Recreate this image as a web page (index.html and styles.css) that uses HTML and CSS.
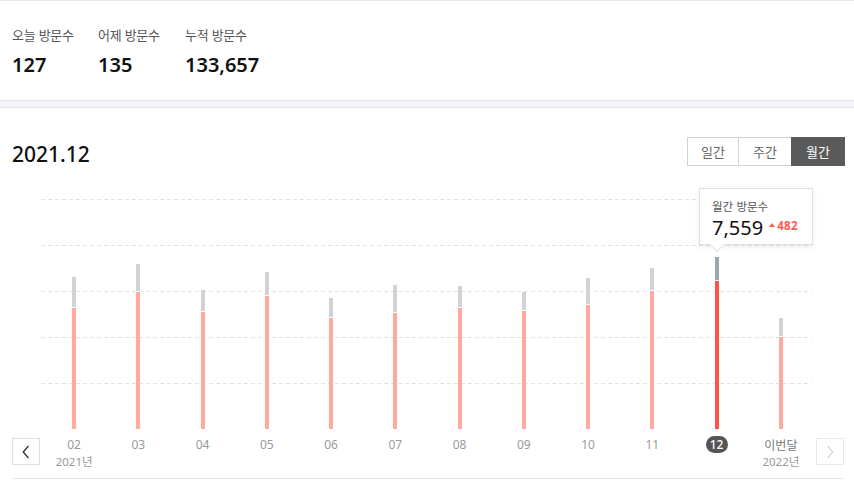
FILE: index.html
```html
<!DOCTYPE html>
<html lang="ko">
<head>
<meta charset="utf-8">
<title>방문 통계</title>
<link rel="stylesheet" href="styles.css">
</head>
<body>
<div class="page">
  <section class="stats">
    <div class="stat"><div class="stat-label">오늘 방문수</div><div class="stat-value">127</div></div>
    <div class="stat"><div class="stat-label">어제 방문수</div><div class="stat-value">135</div></div>
    <div class="stat"><div class="stat-label">누적 방문수</div><div class="stat-value">133,657</div></div>
  </section>
  <div class="band"></div>
  <section class="chart">
    <header class="chart-head">
      <h2 class="period">2021.12</h2>
      <div class="tabs">
        <button class="tab">일간</button>
        <button class="tab">주간</button>
        <button class="tab active">월간</button>
      </div>
    </header>
    <div class="plot">
      <div class="grid-lines">
        <div class="grid-line"></div>
        <div class="grid-line"></div>
        <div class="grid-line"></div>
        <div class="grid-line"></div>
        <div class="grid-line"></div>
      </div>
      <div class="bars">
        <div class="col"><div class="bar"><div class="seg-top" style="height:30px"></div><div class="seg-main" style="height:121px"></div></div></div>
        <div class="col"><div class="bar"><div class="seg-top" style="height:27px"></div><div class="seg-main" style="height:137px"></div></div></div>
        <div class="col"><div class="bar"><div class="seg-top" style="height:21px"></div><div class="seg-main" style="height:117px"></div></div></div>
        <div class="col"><div class="bar"><div class="seg-top" style="height:23px"></div><div class="seg-main" style="height:133px"></div></div></div>
        <div class="col"><div class="bar"><div class="seg-top" style="height:19px"></div><div class="seg-main" style="height:111px"></div></div></div>
        <div class="col"><div class="bar"><div class="seg-top" style="height:27px"></div><div class="seg-main" style="height:116px"></div></div></div>
        <div class="col"><div class="bar"><div class="seg-top" style="height:21px"></div><div class="seg-main" style="height:121px"></div></div></div>
        <div class="col"><div class="bar"><div class="seg-top" style="height:18px"></div><div class="seg-main" style="height:118px"></div></div></div>
        <div class="col"><div class="bar"><div class="seg-top" style="height:26px"></div><div class="seg-main" style="height:124px"></div></div></div>
        <div class="col"><div class="bar"><div class="seg-top" style="height:22px"></div><div class="seg-main" style="height:138px"></div></div></div>
        <div class="col"><div class="bar active"><div class="seg-top" style="height:23px"></div><div class="seg-main" style="height:148px"></div></div></div>
        <div class="col"><div class="bar"><div class="seg-top" style="height:18px"></div><div class="seg-main" style="height:92px"></div></div></div>
      </div>
      <div class="tooltip">
        <div class="tip-label">월간 방문수</div>
        <div class="tip-row"><span class="tip-value">7,559</span><span class="tip-diff"><span class="tri"></span>482</span></div>
      </div>
    </div>
    <div class="axis">
      <button class="nav prev" aria-label="이전">
        <svg width="8" height="14" viewBox="0 0 8 14"><path d="M6.5 1 L1.2 7 L6.5 13" fill="none" stroke="#333" stroke-width="1.3"/></svg>
      </button>
      <div class="labels">
        <div class="lab"><span class="month">02</span><span class="year">2021년</span></div>
        <div class="lab"><span class="month">03</span></div>
        <div class="lab"><span class="month">04</span></div>
        <div class="lab"><span class="month">05</span></div>
        <div class="lab"><span class="month">06</span></div>
        <div class="lab"><span class="month">07</span></div>
        <div class="lab"><span class="month">08</span></div>
        <div class="lab"><span class="month">09</span></div>
        <div class="lab"><span class="month">10</span></div>
        <div class="lab"><span class="month">11</span></div>
        <div class="lab"><span class="month current">12</span></div>
        <div class="lab"><span class="month now">이번달</span><span class="year">2022년</span></div>
      </div>
      <button class="nav next" aria-label="다음">
        <svg width="8" height="14" viewBox="0 0 8 14"><path d="M1.5 1 L6.8 7 L1.5 13" fill="none" stroke="#d4d7dd" stroke-width="1.3"/></svg>
      </button>
    </div>
  </section>
</div>
</body>
</html>
```

FILE: styles.css
```css
* { box-sizing: border-box; }
html, body { margin: 0; padding: 0; background: #fff; }
body {
  font-family: "Noto Sans", "Noto Sans CJK KR", sans-serif;
  color: #111;
}
.page {
  width: 854px;
  border-top: 1px solid #e4e7ed;
}
.stats {
  display: flex;
  padding: 25px 12px 0;
  height: 99px;
}
.stat { white-space: nowrap; }
.stat:nth-child(1) { width: 86px; }
.stat:nth-child(2) { width: 87px; }
.stat-label {
  font-family: "Noto Sans CJK KR", sans-serif;
  font-size: 13px;
  line-height: 17px;
  color: #555;
  letter-spacing: -0.3px;
}
.stat-value {
  margin-top: 9px;
  font-size: 20px;
  line-height: 26px;
  font-weight: 600;
  color: #111;
}

.band {
  height: 8px;
  background: #f4f5f8;
  border-top: 1px solid #e2e5eb;
  border-bottom: 1px solid #e2e5eb;
}

.chart {
  padding: 0 10px 0 12px;
}
.chart-head {
  display: flex;
  justify-content: space-between;
  align-items: flex-start;
  height: 58px;
  padding-top: 29px;
  margin-right: -1px;
}
.period {
  margin: 3px 0 0;
  font-size: 21px;
  line-height: 29px;
  font-weight: 500;
  color: #111;
}
.tabs { display: flex; }
.tab {
  width: 54px;
  height: 29px;
  margin: 0 0 0 -1px;
  padding: 0;
  border: 1px solid #cfd4dc;
  background: #fff;
  color: #666;
  font-family: "Noto Sans CJK KR", sans-serif;
  font-size: 13px;
  line-height: 27px;
}
.tab:first-child { margin-left: 0; width: 52px; }
.tab.active {
  background: #5a5a5a;
  border-color: #5a5a5a;
  color: #fff;
}

.plot {
  position: relative;
  margin: 33px 0 0 30px;
  width: 771px;
  height: 230px;
}
.grid-lines {
  position: absolute;
  left: -1px;
  right: 1px;
  top: 0;
  display: flex;
  flex-direction: column;
  gap: 45px;
}
.grid-line {
  height: 1px;
  background: repeating-linear-gradient(to right, #e3e3e3 0 4px, transparent 4px 7px);
}
.bars {
  position: relative;
  display: grid;
  grid-template-columns: repeat(12, 1fr);
  height: 230px;
  align-items: end;
}
.col {
  display: flex;
  justify-content: center;
  align-items: flex-end;
  height: 100%;
}
.bar {
  width: 4px;
  display: flex;
  flex-direction: column;
  gap: 1px;
}
.seg-top { background: #cfd3d7; }
.seg-main { background: #ffa9a0; }
.bar.active .seg-top { background: #9ea6ae; }
.bar.active .seg-main { background: #ff5445; }

.tooltip {
  position: absolute;
  left: 657px;
  top: -11px;
  width: 114px;
  height: 57px;
  background: #fff;
  border: 1px solid #dde1ea;
  box-shadow: 0 2px 6px rgba(0, 0, 0, 0.07);
  padding: 10px 0 0 12px;
}
.tooltip::after {
  content: "";
  position: absolute;
  left: 12px;
  bottom: -6px;
  width: 9px;
  height: 9px;
  background: #fff;
  border-right: 1px solid #e6e8ee;
  border-bottom: 1px solid #e6e8ee;
  transform: rotate(45deg);
}
.tip-label {
  font-family: "Noto Sans CJK KR", sans-serif;
  font-size: 11.5px;
  line-height: 15px;
  color: #555;
}
.tip-row {
  display: flex;
  align-items: flex-start;
  margin-top: 2px;
}
.tip-value {
  font-size: 20px;
  line-height: 24px;
  color: #111;
}
.tip-diff {
  display: flex;
  align-items: center;
  margin: 3px 0 0 6px;
  font-size: 11.5px;
  line-height: 14px;
  font-weight: 700;
  color: #ff5a4b;
  letter-spacing: 0.3px;
}
.tri {
  width: 0;
  height: 0;
  border-left: 3px solid transparent;
  border-right: 3px solid transparent;
  border-bottom: 4px solid #ff5a4b;
  margin: -2px 2px 0 0;
}

.axis {
  display: flex;
  align-items: flex-start;
  padding: 7px 0 8px;
  border-bottom: 1px solid #e6e6e6;
}
.nav {
  width: 28px;
  height: 27px;
  margin-top: 2px;
  padding: 0;
  display: flex;
  align-items: center;
  justify-content: center;
  background: #fff;
  border: 1px solid #dcdfe5;
}
.nav.next { border-color: #e6e8ee; margin-left: 3px; }
.labels {
  margin-left: 2px;
  width: 771px;
  display: grid;
  grid-template-columns: repeat(12, 1fr);
  height: 34px;
}
.lab {
  display: flex;
  flex-direction: column;
  align-items: center;
}
.month {
  font-size: 12px;
  line-height: 17px;
  height: 17px;
  color: #9a9a9a;
}
.month.current {
  width: 22px;
  border-radius: 9px;
  background: #555;
  color: #fff;
  text-align: center;
  font-weight: 500;
}
.month.now {
  font-family: "Noto Sans CJK KR", sans-serif;
  color: #777;
}
.year {
  margin-top: 1px;
  font-size: 11.5px;
  line-height: 16px;
  color: #999;
  font-family: "Noto Sans", "Noto Sans CJK KR", sans-serif;
}
```
